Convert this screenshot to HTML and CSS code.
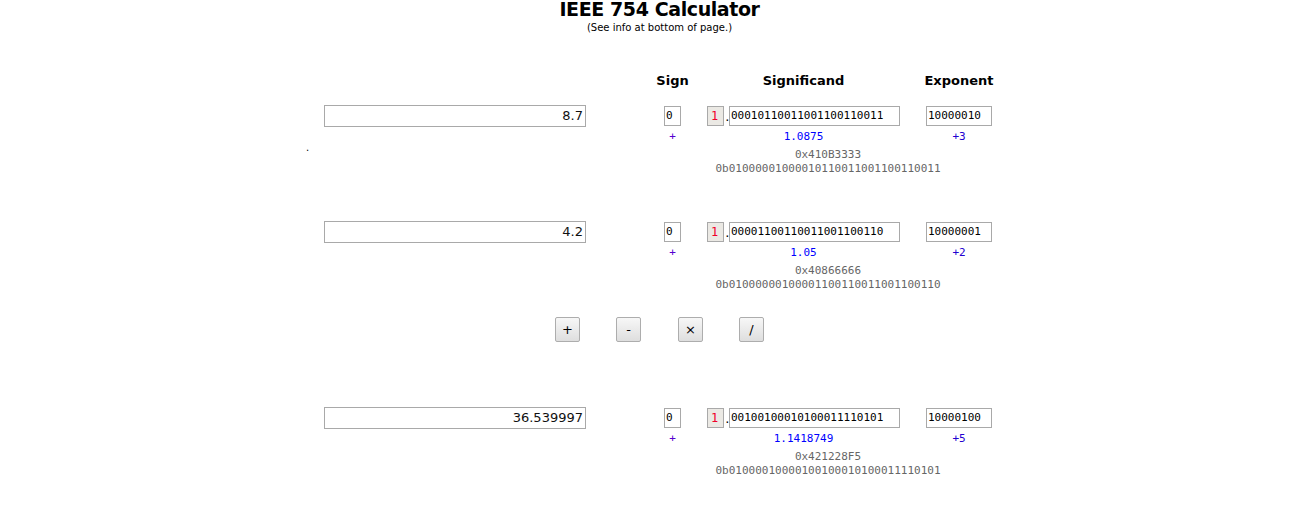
FILE: index.html
```html
<!DOCTYPE html>
<html lang="en">
<head>
<meta charset="utf-8">
<title>IEEE 754 Calculator</title>
<link rel="stylesheet" href="styles.css">
</head>
<body>
<header class="head">
  <h1 class="title">IEEE 754 Calculator</h1>
  <p class="note">(See info at bottom of page.)</p>
</header>
<main class="calc">
  <div class="labels">
    <div class="left-spacer"></div>
    <div class="bits-grid">
      <div class="lbl">Sign</div>
      <div class="lbl">Significand</div>
      <div class="lbl">Exponent</div>
    </div>
  </div>

  <section class="block">
    <div class="left">
      <div class="dec">8.7</div>
      <div class="stray">.</div>
    </div>
    <div class="bits-grid">
      <div class="box sign">0</div>
      <div class="sig"><span class="box hidden-bit">1</span><span class="point">.</span><span class="box mant">00010110011001100110011</span></div>
      <div class="box exp">10000010</div>
      <div class="sgn-val">+</div>
      <div class="sig-val">1.0875</div>
      <div class="exp-val">+3</div>
      <div class="raw hex">0x410B3333</div>
      <div class="raw">0b01000001000010110011001100110011</div>
    </div>
  </section>

  <section class="block">
    <div class="left">
      <div class="dec">4.2</div>
    </div>
    <div class="bits-grid">
      <div class="box sign">0</div>
      <div class="sig"><span class="box hidden-bit">1</span><span class="point">.</span><span class="box mant">00001100110011001100110</span></div>
      <div class="box exp">10000001</div>
      <div class="sgn-val">+</div>
      <div class="sig-val">1.05</div>
      <div class="exp-val">+2</div>
      <div class="raw hex">0x40866666</div>
      <div class="raw">0b01000000100001100110011001100110</div>
    </div>
  </section>

  <div class="ops">
    <button class="op" type="button">+</button>
    <button class="op" type="button">-</button>
    <button class="op op-wide" type="button">×</button>
    <button class="op" type="button">/</button>
  </div>

  <section class="block result">
    <div class="left">
      <div class="dec">36.539997</div>
    </div>
    <div class="bits-grid">
      <div class="box sign">0</div>
      <div class="sig"><span class="box hidden-bit">1</span><span class="point">.</span><span class="box mant">00100100010100011110101</span></div>
      <div class="box exp">10000100</div>
      <div class="sgn-val">+</div>
      <div class="sig-val">1.1418749</div>
      <div class="exp-val">+5</div>
      <div class="raw hex">0x421228F5</div>
      <div class="raw">0b01000010000100100010100011110101</div>
    </div>
  </section>
</main>
</body>
</html>
```

FILE: styles.css
```css
html, body {
  margin: 0;
  padding: 0;
  background: #ffffff;
}

body {
  font-family: "DejaVu Sans", Verdana, sans-serif;
  color: #000;
}

.head {
  padding-left: 22px;
  text-align: center;
}

.title {
  margin: 0;
  font-size: 19px;
  line-height: 18px;
  font-weight: bold;
  letter-spacing: -0.4px;
}

.note {
  margin: 4px 0 0;
  font-size: 10px;
  line-height: 12px;
}

.calc {
  margin-left: 306px;
  display: flex;
  flex-direction: column;
  align-items: flex-start;
}

.labels {
  margin-top: 39px;
  display: flex;
  gap: 78px;
}

.left-spacer {
  width: 280px;
}

.lbl {
  justify-self: center;
  font-size: 13px;
  line-height: 16px;
  font-weight: bold;
  text-align: center;
  white-space: nowrap;
}

.bits-grid {
  display: grid;
  grid-template-columns: 17px 193px 66px;
  column-gap: 26px;
  align-items: center;
}

.block {
  margin-top: 16px;
  display: flex;
  gap: 78px;
  align-items: flex-start;
}

.block + .block {
  margin-top: 45px;
}

.block.result {
  margin-top: 65px;
}

.block .bits-grid {
  grid-template-rows: 22px;
  grid-auto-rows: auto;
}

.left {
  width: 280px;
  display: flex;
  flex-direction: column;
}

.dec {
  margin-left: 18px;
  width: 262px;
  height: 22px;
  box-sizing: border-box;
  border: 1px solid #a9a9a9;
  padding: 0 2px 0 0;
  font-size: 13px;
  line-height: 20px;
  text-align: right;
  color: #111;
}

.stray {
  margin-top: 15px;
  font-size: 10px;
  line-height: 12px;
}

.box {
  box-sizing: border-box;
  height: 20px;
  border: 1px solid #a9a9a9;
  font-family: "DejaVu Sans Mono", monospace;
  font-size: 11px;
  line-height: 18px;
  padding-left: 1px;
  color: #000;
  background: #fff;
  white-space: nowrap;
  overflow: hidden;
}

.sign {
  width: 17px;
}

.sig {
  display: flex;
  align-items: center;
}

.hidden-bit {
  width: 17px;
  background: #ebe9e4;
  color: #f0002a;
  font-size: 12px;
  padding-left: 3px;
}

.point {
  width: 5px;
  font-family: "DejaVu Sans Mono", monospace;
  font-size: 11px;
  line-height: 18px;
  padding-top: 4px;
  text-align: center;
}

.mant {
  width: 171px;
}

.exp {
  width: 66px;
}

.sgn-val,
.sig-val,
.exp-val,
.raw {
  font-family: "DejaVu Sans Mono", monospace;
  font-size: 11px;
  line-height: 14px;
  text-align: center;
  white-space: nowrap;
}

.sgn-val,
.sig-val,
.exp-val {
  margin-top: 3px;
  justify-self: center;
}

.sgn-val {
  color: #5500d0;
}

.sig-val {
  color: #0000ff;
}

.exp-val {
  color: #2200d0;
}

.raw {
  grid-column: 1 / -1;
  justify-self: center;
  color: #666;
}

.raw.hex {
  margin-top: 4px;
}

.ops {
  margin-top: 25px;
  padding-left: 249px;
  display: flex;
  gap: 36px;
}

.op-wide {
  margin-left: 1px;
}

.op {
  width: 25px;
  height: 25px;
  padding: 0;
  box-sizing: border-box;
  border: 1px solid #adadad;
  border-radius: 2px;
  background: linear-gradient(#f7f7f7, #dedede);
  font-family: "DejaVu Sans", Verdana, sans-serif;
  font-size: 13px;
  color: #000;
}
```
